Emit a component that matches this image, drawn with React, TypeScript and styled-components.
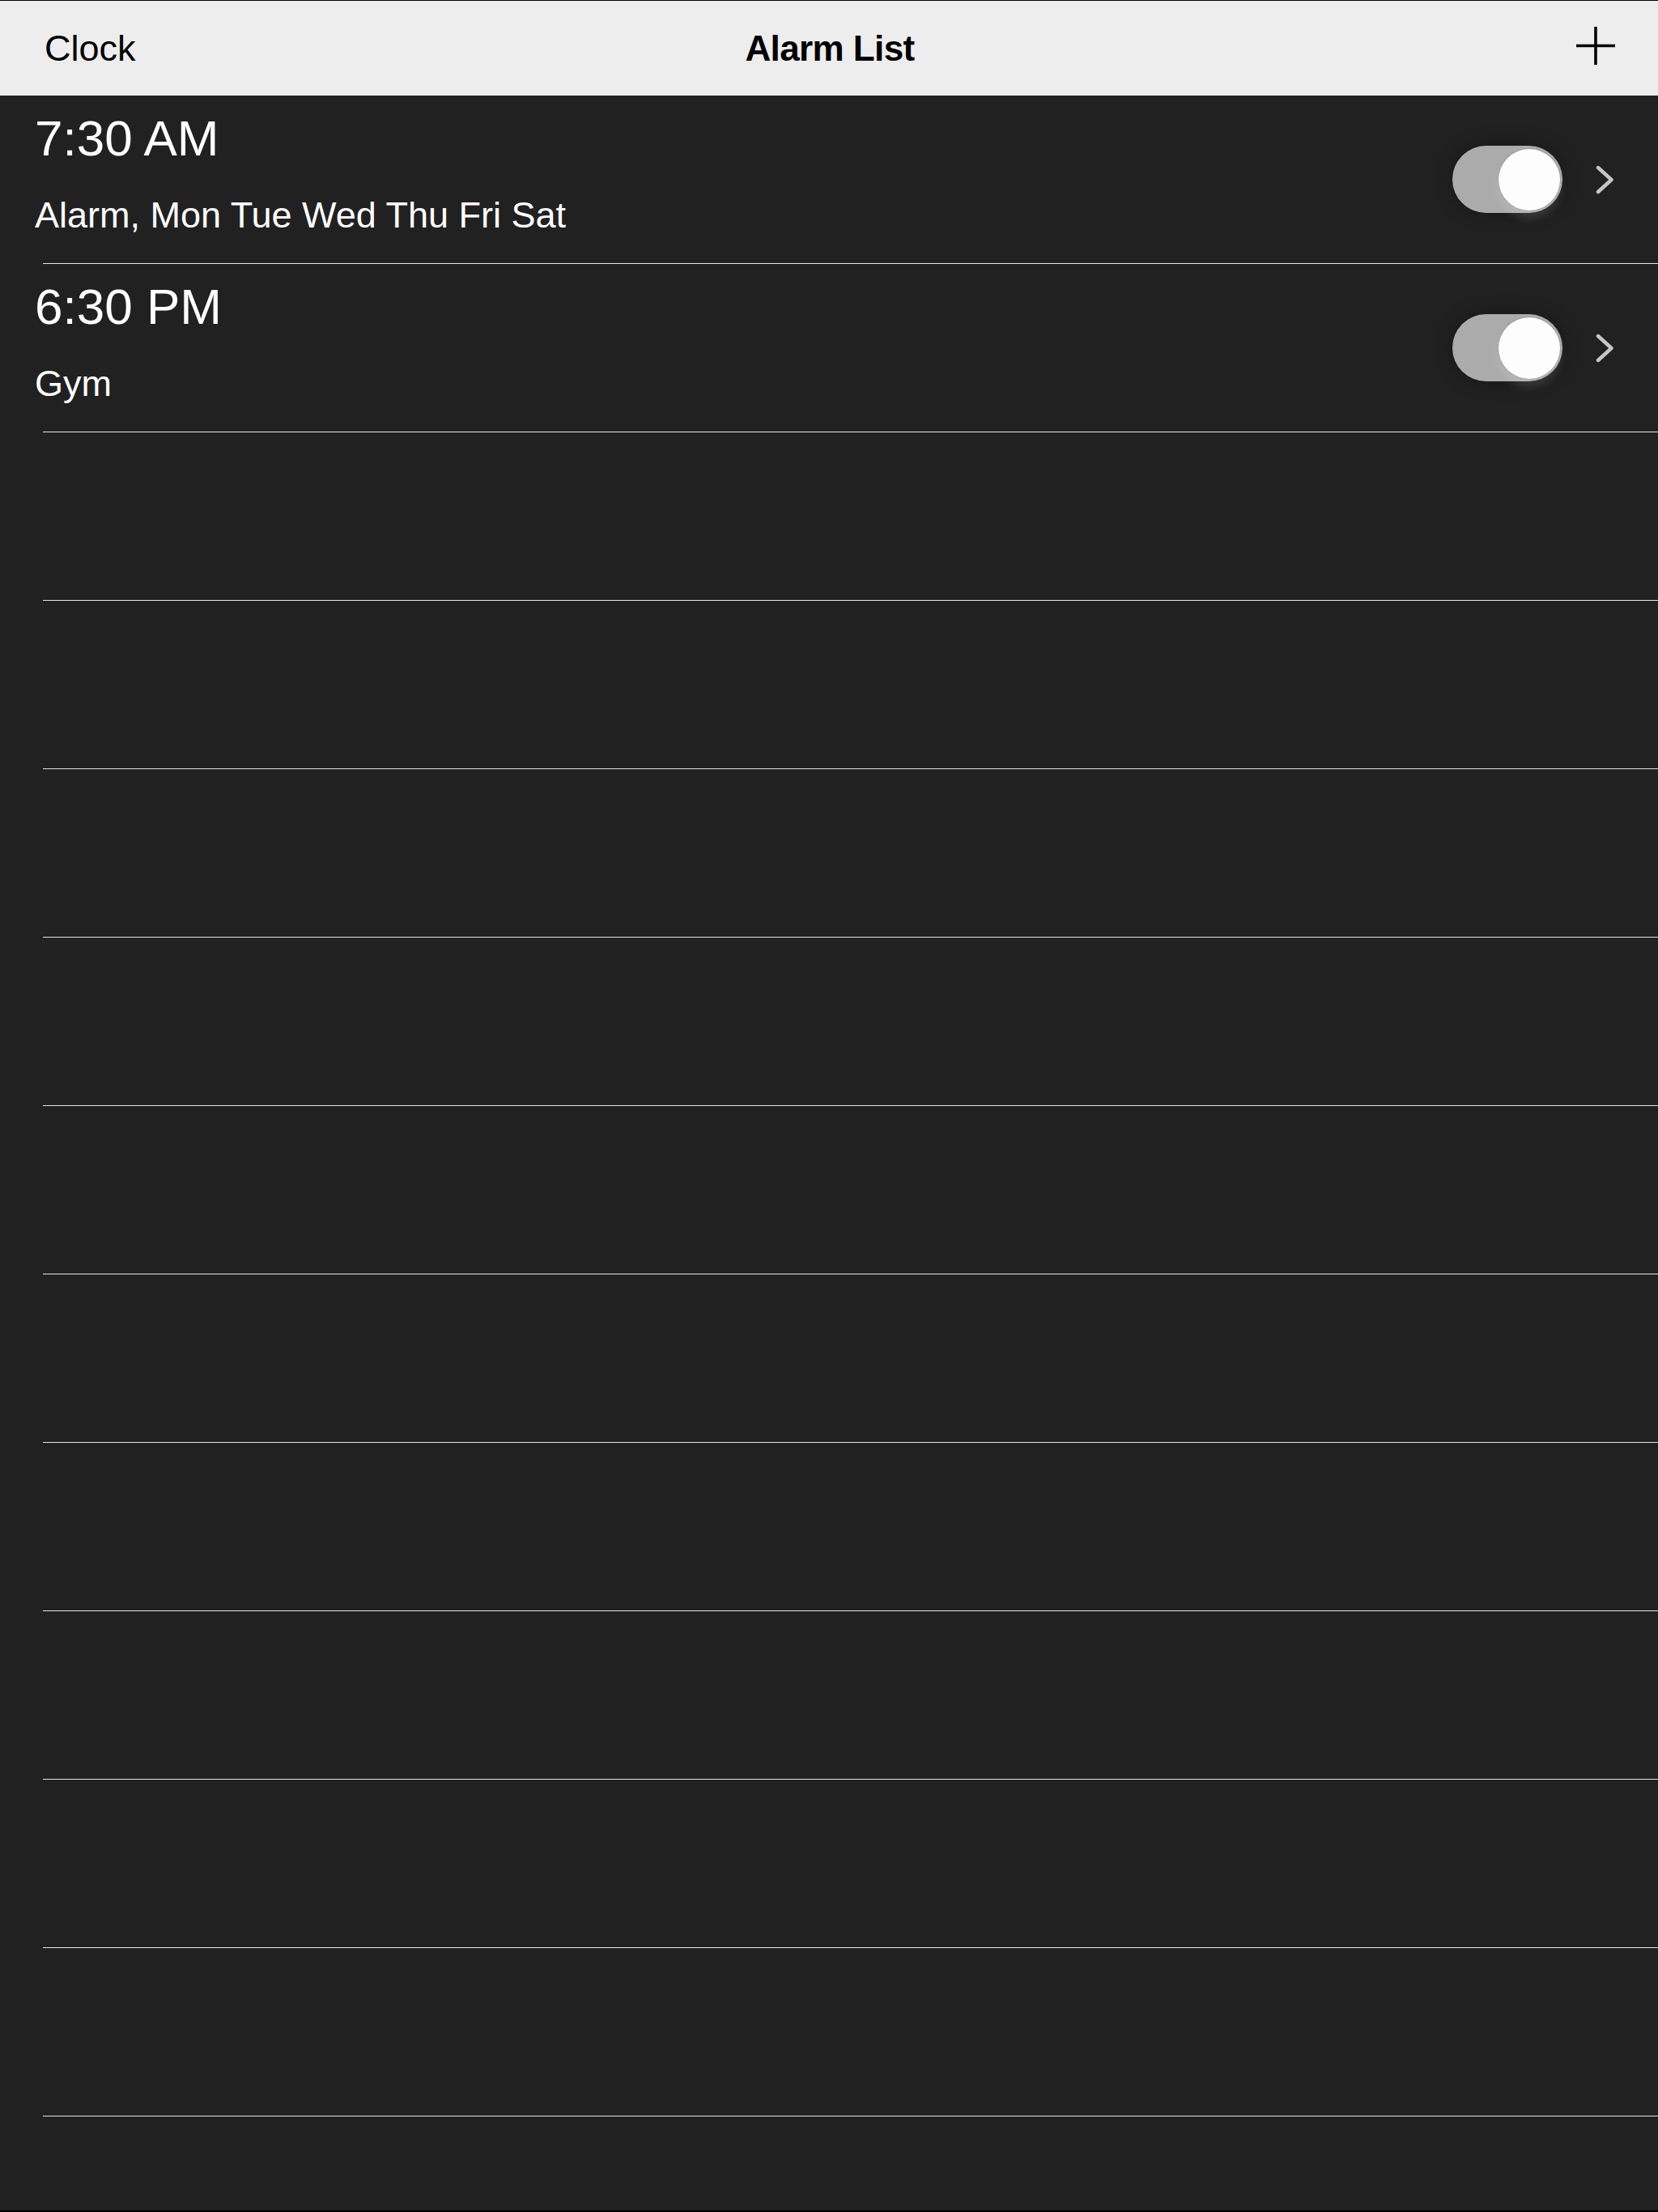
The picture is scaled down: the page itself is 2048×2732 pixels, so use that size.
import React from "react";
import styled, { createGlobalStyle } from "styled-components";

const GlobalStyle = createGlobalStyle`
  html, body {
    margin: 0;
    padding: 0;
    background: #212121;
  }
  * {
    box-sizing: border-box;
  }
  body {
    font-family: "Liberation Sans", Arial, Helvetica, sans-serif;
    -webkit-font-smoothing: antialiased;
  }
`;

const Screen = styled.div`
  display: flex;
  flex-direction: column;
  width: 2048px;
  height: 2732px;
  border-top: 1px solid #000;
  border-bottom: 2px solid #000;
  background: #212121;
  overflow: hidden;
`;

const NavBar = styled.header`
  display: grid;
  grid-template-columns: 1fr auto 1fr;
  align-items: center;
  height: 117px;
  padding: 0 53px 0 55px;
  background: #ededed;
  color: #000;
  flex-shrink: 0;
`;

const NavButton = styled.button`
  justify-self: start;
  border: 0;
  padding: 0;
  background: none;
  font-family: inherit;
  font-size: 45px;
  line-height: 1;
  color: #000;
  cursor: pointer;
`;

const NavTitle = styled.h1`
  margin: 0;
  font-size: 44px;
  font-weight: 700;
  letter-spacing: -0.6px;
  line-height: 1;
`;

const AddButton = styled.button`
  justify-self: end;
  display: flex;
  border: 0;
  padding: 0;
  margin-bottom: 7px;
  background: none;
  cursor: pointer;
`;

const List = styled.ul`
  flex: 1;
  margin: 0;
  padding: 0;
  list-style: none;
`;

const Cell = styled.li`
  display: flex;
  flex-direction: column;
`;

const CellBody = styled.div`
  display: flex;
  align-items: center;
  height: 207px;
  padding: 0 54px 0 43px;
`;

const Labels = styled.div`
  flex: 1;
  display: flex;
  flex-direction: column;
  align-self: stretch;
  padding-top: 22px;
  gap: 41px;
  color: #fff;
`;

const Time = styled.div`
  font-size: 62px;
  line-height: 62px;
`;

const Detail = styled.div`
  font-size: 45px;
  line-height: 45px;
`;

const Divider = styled.div`
  height: 1px;
  margin-left: 53px;
  background: #e6e6e6;
`;

const Track = styled.button<{ $on: boolean }>`
  display: flex;
  align-items: center;
  justify-content: ${(p) => (p.$on ? "flex-end" : "flex-start")};
  width: 136px;
  height: 83px;
  padding: 0 3px 0 4px;
  border: 0;
  border-radius: 42px;
  background: #ababab;
  box-shadow: 0 0 22px rgba(0, 0, 0, 0.35);
  cursor: pointer;
`;

const Knob = styled.span`
  width: 76px;
  height: 76px;
  border-radius: 50%;
  background: #fdfdfd;
  box-shadow: 0 0 0 1px rgba(0, 0, 0, 0.08), 0 9px 12px rgba(255, 255, 255, 0.14);
`;

const Disclosure = styled.svg`
  margin-left: 41px;
  flex-shrink: 0;
`;

type Alarm = { time: string; label: string; enabled: boolean };

const alarms: Alarm[] = [
  { time: "7:30 AM", label: "Alarm, Mon Tue Wed Thu Fri Sat", enabled: true },
  { time: "6:30 PM", label: "Gym", enabled: true },
];

const EMPTY_ROWS = 10;

function PlusIcon() {
  return (
    <svg width="48" height="47" viewBox="0 0 48 47" aria-hidden="true">
      <path d="M24 0V47M0 23.5H48" stroke="#000" strokeWidth="3.6" fill="none" />
    </svg>
  );
}

function Chevron() {
  return (
    <Disclosure width="23" height="36" viewBox="0 0 23 36" aria-hidden="true">
      <polyline
        points="3,3 19.5,18 3,33"
        fill="none"
        stroke="#c6c6c6"
        strokeWidth="4.4"
        strokeLinecap="round"
        strokeLinejoin="round"
      />
    </Disclosure>
  );
}

function AlarmRow({ alarm }: { alarm: Alarm }) {
  const [on, setOn] = React.useState(alarm.enabled);
  return (
    <Cell>
      <CellBody>
        <Labels>
          <Time>{alarm.time}</Time>
          <Detail>{alarm.label}</Detail>
        </Labels>
        <Track
          role="switch"
          aria-checked={on}
          aria-label={`${alarm.time} alarm`}
          $on={on}
          onClick={() => setOn((v) => !v)}
        >
          <Knob />
        </Track>
        <Chevron />
      </CellBody>
      <Divider />
    </Cell>
  );
}

export default function App() {
  return (
    <>
      <GlobalStyle />
      <Screen>
        <NavBar>
          <NavButton>Clock</NavButton>
          <NavTitle>Alarm List</NavTitle>
          <AddButton aria-label="Add alarm">
            <PlusIcon />
          </AddButton>
        </NavBar>
        <List>
          {alarms.map((a) => (
            <AlarmRow key={a.time} alarm={a} />
          ))}
          {Array.from({ length: EMPTY_ROWS }, (_, i) => (
            <Cell key={`empty-${i}`}>
              <CellBody />
              <Divider />
            </Cell>
          ))}
        </List>
      </Screen>
    </>
  );
}
